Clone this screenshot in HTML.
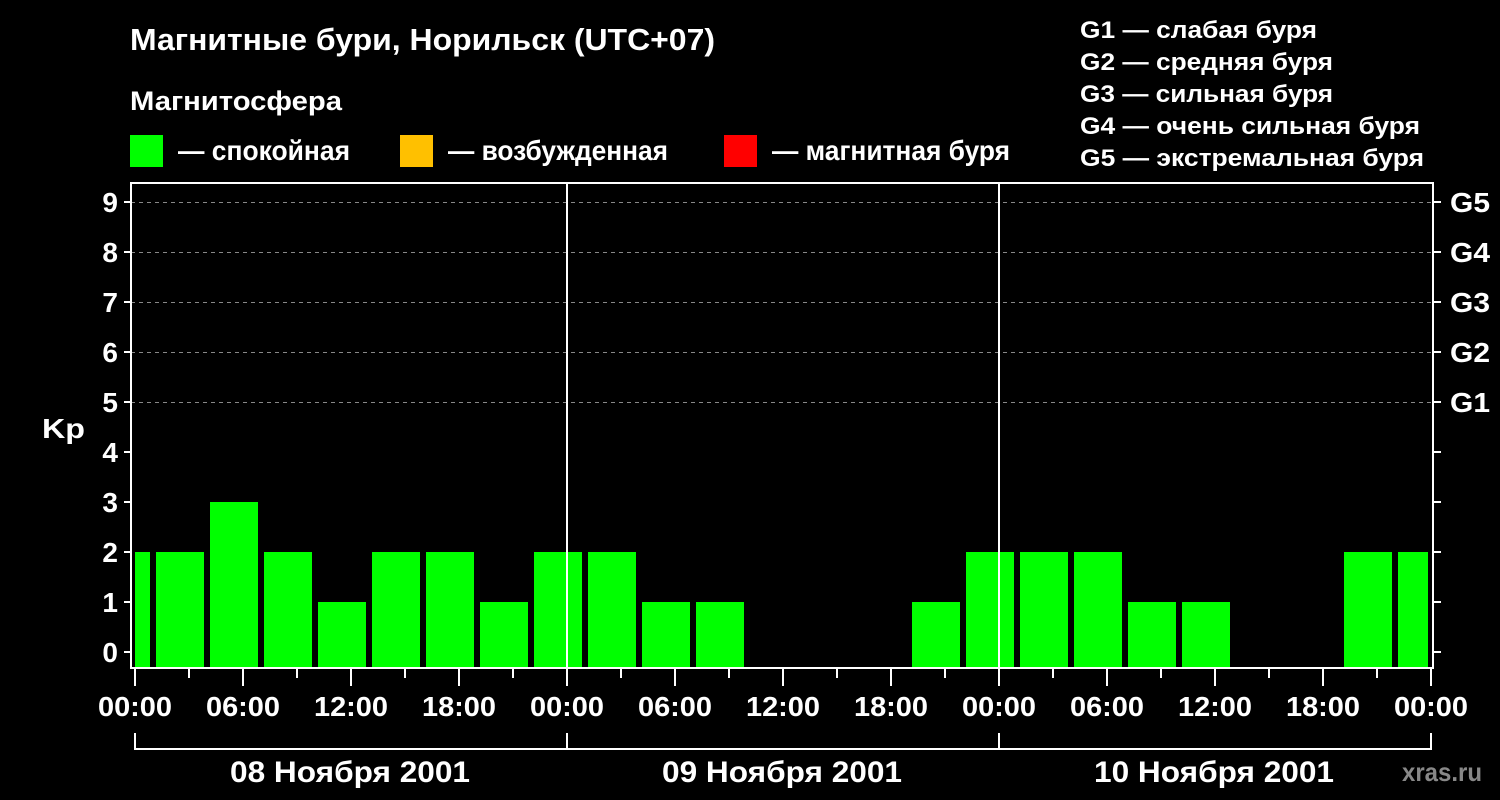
<!DOCTYPE html>
<html><head><meta charset="utf-8"><style>
html,body{margin:0;padding:0;background:#000;}
svg{display:block;}
text{font-family:"Liberation Sans",Arial,sans-serif;font-weight:bold;fill:#fff;}
</style></head><body>
<svg width="1500" height="800" viewBox="0 0 1500 800" xmlns="http://www.w3.org/2000/svg">
<rect width="1500" height="800" fill="#000"/>
<text x="130" y="50" font-size="31" textLength="585" lengthAdjust="spacingAndGlyphs">Магнитные бури, Норильск (UTC+07)</text>
<text x="130" y="110" font-size="27" textLength="212" lengthAdjust="spacingAndGlyphs">Магнитосфера</text>
<rect x="130" y="135" width="33" height="32" fill="#00ff00"/>
<text x="178" y="160" font-size="28" textLength="172" lengthAdjust="spacingAndGlyphs">— спокойная</text>
<rect x="400" y="135" width="33" height="32" fill="#ffc000"/>
<text x="448" y="160" font-size="28" textLength="220" lengthAdjust="spacingAndGlyphs">— возбужденная</text>
<rect x="724" y="135" width="33" height="32" fill="#ff0000"/>
<text x="772" y="160" font-size="28" textLength="238" lengthAdjust="spacingAndGlyphs">— магнитная буря</text>
<g font-size="24">
<text x="1080" y="38" textLength="237" lengthAdjust="spacingAndGlyphs">G1 — слабая буря</text>
<text x="1080" y="70" textLength="253" lengthAdjust="spacingAndGlyphs">G2 — средняя буря</text>
<text x="1080" y="102" textLength="253" lengthAdjust="spacingAndGlyphs">G3 — сильная буря</text>
<text x="1080" y="134" textLength="340" lengthAdjust="spacingAndGlyphs">G4 — очень сильная буря</text>
<text x="1080" y="166" textLength="344" lengthAdjust="spacingAndGlyphs">G5 — экстремальная буря</text>
</g>
<g stroke="#888" stroke-width="1" stroke-dasharray="4,4">
<line x1="131" x2="1433" y1="202.5" y2="202.5"/>
<line x1="131" x2="1433" y1="252.5" y2="252.5"/>
<line x1="131" x2="1433" y1="302.5" y2="302.5"/>
<line x1="131" x2="1433" y1="352.5" y2="352.5"/>
<line x1="131" x2="1433" y1="402.5" y2="402.5"/>
</g>
<g fill="#00ff00">
<rect x="135" y="552" width="15" height="116"/>
<rect x="156" y="552" width="48" height="116"/>
<rect x="210" y="502" width="48" height="166"/>
<rect x="264" y="552" width="48" height="116"/>
<rect x="318" y="602" width="48" height="66"/>
<rect x="372" y="552" width="48" height="116"/>
<rect x="426" y="552" width="48" height="116"/>
<rect x="480" y="602" width="48" height="66"/>
<rect x="534" y="552" width="48" height="116"/>
<rect x="588" y="552" width="48" height="116"/>
<rect x="642" y="602" width="48" height="66"/>
<rect x="696" y="602" width="48" height="66"/>
<rect x="912" y="602" width="48" height="66"/>
<rect x="966" y="552" width="48" height="116"/>
<rect x="1020" y="552" width="48" height="116"/>
<rect x="1074" y="552" width="48" height="116"/>
<rect x="1128" y="602" width="48" height="66"/>
<rect x="1182" y="602" width="48" height="66"/>
<rect x="1344" y="552" width="48" height="116"/>
<rect x="1398" y="552" width="30" height="116"/>
</g>
<g stroke="#fff" stroke-width="2" fill="none">
<rect x="131" y="183" width="1302" height="485"/>
<line x1="567" y1="183" x2="567" y2="668"/>
<line x1="999" y1="183" x2="999" y2="668"/>
<path d="M124 202H131M124 252H131M124 302H131M124 352H131M124 402H131M124 452H131M124 502H131M124 552H131M124 602H131M124 652H131"/>
<path d="M1433 202H1441M1433 252H1441M1433 302H1441M1433 352H1441M1433 402H1441M1433 452H1441M1433 502H1441M1433 552H1441M1433 602H1441M1433 652H1441"/>
<path d="M135 668V686M243 668V686M351 668V686M459 668V686M567 668V686M675 668V686M783 668V686M891 668V686M999 668V686M1107 668V686M1215 668V686M1323 668V686M1431 668V686"/>
<path d="M189 668V678M297 668V678M405 668V678M513 668V678M621 668V678M729 668V678M837 668V678M945 668V678M1053 668V678M1161 668V678M1269 668V678M1377 668V678"/>
<path d="M135 733V749H1431V733M567 733V749M999 733V749"/>
</g>
<g font-size="28" text-anchor="end">
<text x="118" y="212">9</text><text x="118" y="262">8</text><text x="118" y="312">7</text>
<text x="118" y="362">6</text><text x="118" y="412">5</text><text x="118" y="462">4</text>
<text x="118" y="512">3</text><text x="118" y="562">2</text><text x="118" y="612">1</text>
<text x="118" y="662">0</text>
</g>
<text x="42" y="438" font-size="28" textLength="43" lengthAdjust="spacingAndGlyphs">Kp</text>
<g font-size="28">
<text x="1450" y="212" textLength="40" lengthAdjust="spacingAndGlyphs">G5</text>
<text x="1450" y="262" textLength="40" lengthAdjust="spacingAndGlyphs">G4</text>
<text x="1450" y="312" textLength="40" lengthAdjust="spacingAndGlyphs">G3</text>
<text x="1450" y="362" textLength="40" lengthAdjust="spacingAndGlyphs">G2</text>
<text x="1450" y="412" textLength="40" lengthAdjust="spacingAndGlyphs">G1</text>
</g>
<g font-size="28">
<text x="98" y="716" textLength="74" lengthAdjust="spacingAndGlyphs">00:00</text>
<text x="206" y="716" textLength="74" lengthAdjust="spacingAndGlyphs">06:00</text>
<text x="314" y="716" textLength="74" lengthAdjust="spacingAndGlyphs">12:00</text>
<text x="422" y="716" textLength="74" lengthAdjust="spacingAndGlyphs">18:00</text>
<text x="530" y="716" textLength="74" lengthAdjust="spacingAndGlyphs">00:00</text>
<text x="638" y="716" textLength="74" lengthAdjust="spacingAndGlyphs">06:00</text>
<text x="746" y="716" textLength="74" lengthAdjust="spacingAndGlyphs">12:00</text>
<text x="854" y="716" textLength="74" lengthAdjust="spacingAndGlyphs">18:00</text>
<text x="962" y="716" textLength="74" lengthAdjust="spacingAndGlyphs">00:00</text>
<text x="1070" y="716" textLength="74" lengthAdjust="spacingAndGlyphs">06:00</text>
<text x="1178" y="716" textLength="74" lengthAdjust="spacingAndGlyphs">12:00</text>
<text x="1286" y="716" textLength="74" lengthAdjust="spacingAndGlyphs">18:00</text>
<text x="1394" y="716" textLength="74" lengthAdjust="spacingAndGlyphs">00:00</text>
</g>
<g font-size="30">
<text x="230" y="782" textLength="240" lengthAdjust="spacingAndGlyphs">08 Ноября 2001</text>
<text x="662" y="782" textLength="240" lengthAdjust="spacingAndGlyphs">09 Ноября 2001</text>
<text x="1094" y="782" textLength="240" lengthAdjust="spacingAndGlyphs">10 Ноября 2001</text>
</g>
<text x="1402" y="781" font-size="26" textLength="80" lengthAdjust="spacingAndGlyphs" style="fill:#888">xras.ru</text>
</svg>
</body></html>
